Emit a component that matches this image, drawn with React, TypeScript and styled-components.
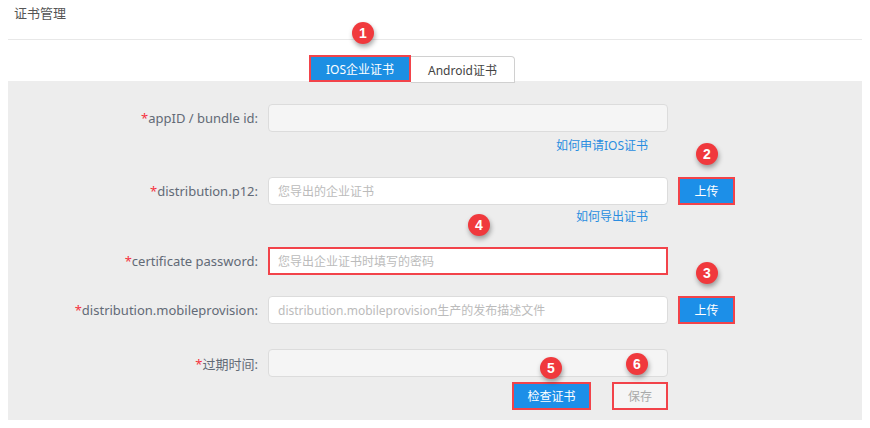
import React from 'react'
import styled, { createGlobalStyle } from 'styled-components'

const GlobalStyle = createGlobalStyle`
  html, body {
    margin: 0;
    padding: 0;
    background: #fff;
    font-family: "Noto Sans", "Noto Sans CJK SC", sans-serif;
  }
`

const Page = styled.div`
  width: 870px;
  height: 428px;
  position: relative;
  overflow: hidden;
`

const Header = styled.div`
  height: 40px;
  margin: 0 8px;
  border-bottom: 1px solid #e8e8e8;
  box-sizing: border-box;
  padding: 3px 0 0 6px;
  font-size: 13px;
  color: #555;
`

const Tabs = styled.div`
  display: flex;
  padding: 15px 0 0 301px;
  margin: 0 8px -2px;
  position: relative;
  z-index: 1;
`

const Tab = styled.div<{ $active?: boolean }>`
  height: 27px;
  box-sizing: border-box;
  display: flex;
  align-items: center;
  justify-content: center;
  font-size: 12px;
  width: ${(p) => (p.$active ? '102px' : '104px')};
  background: ${(p) => (p.$active ? '#1c8fe3' : '#fff')};
  color: ${(p) => (p.$active ? '#fff' : '#444')};
  border: ${(p) => (p.$active ? '2px solid #f2434a' : '1px solid #d0d0d0')};
  border-left: ${(p) => (p.$active ? '2px solid #f2434a' : 'none')};
  border-radius: ${(p) => (p.$active ? '0' : '0 4px 0 0')};
  margin-top: ${(p) => (p.$active ? '0' : '1px')};
`

const Panel = styled.div`
  margin: 0 8px;
  height: 339px;
  background: #ededed;
  padding-top: 23px;
  box-sizing: border-box;
`

const Row = styled.div<{ $gap?: number }>`
  display: grid;
  grid-template-columns: 250px 400px auto;
  column-gap: 10px;
  align-items: center;
  margin-top: ${(p) => p.$gap ?? 0}px;
  height: 28px;
`

const Label = styled.label`
  text-align: right;
  font-size: 13px;
  color: #626a76;
  white-space: nowrap;

  span {
    color: #f5333f;
  }
`

const Input = styled.div<{ $disabled?: boolean; $mark?: boolean }>`
  height: 28px;
  box-sizing: border-box;
  background: ${(p) => (p.$disabled ? '#f5f5f5' : '#fff')};
  border: ${(p) => (p.$mark ? '2px solid #f2434a' : '1px solid #dcdcdc')};
  border-radius: ${(p) => (p.$mark ? '0' : '4px')};
  padding: 0 ${(p) => (p.$mark ? '8px' : '9px')};
  display: flex;
  align-items: center;
  font-size: 12px;
  color: #bbb;
  white-space: nowrap;
  overflow: hidden;
`

const Hint = styled.div<{ $gap: number }>`
  margin: ${(p) => p.$gap}px 0 0 260px;
  width: 380px;
  height: 20px;
  line-height: 20px;
  text-align: right;
  font-size: 12px;
  color: #2a8de0;
`

const Button = styled.button<{ $primary?: boolean; $width: number }>`
  width: ${(p) => p.$width}px;
  height: 28px;
  box-sizing: border-box;
  border: 2px solid #f2434a;
  background: ${(p) => (p.$primary ? '#1c8fe8' : '#f5f5f5')};
  color: ${(p) => (p.$primary ? '#fff' : '#aaa')};
  font-family: inherit;
  font-size: 12px;
  padding: 0;
  cursor: pointer;
`

const Actions = styled.div`
  display: flex;
  gap: 21px;
  margin: 5px 0 0 504px;
`

const Badge = styled.div<{ $x: number; $y: number }>`
  position: absolute;
  left: ${(p) => p.$x - 11}px;
  top: ${(p) => p.$y - 11}px;
  width: 22px;
  height: 22px;
  border-radius: 50%;
  background: #f0393d;
  color: #fff;
  font-size: 14px;
  font-weight: 600;
  display: flex;
  align-items: center;
  justify-content: center;
  box-shadow: 1px 3px 5px rgba(0, 0, 0, 0.35);
  z-index: 5;
  font-family: "Liberation Sans", Arial, sans-serif;
`

const badges = [
  { n: 1, x: 363, y: 33 },
  { n: 2, x: 707, y: 154 },
  { n: 3, x: 707, y: 273 },
  { n: 4, x: 479, y: 225 },
  { n: 5, x: 551, y: 368 },
  { n: 6, x: 637, y: 364 },
]

export default function App() {
  return (
    <Page>
      <GlobalStyle />
      <Header>证书管理</Header>
      <Tabs>
        <Tab $active>IOS企业证书</Tab>
        <Tab>Android证书</Tab>
      </Tabs>
      <Panel>
        <Row>
          <Label><span>*</span>appID / bundle id:</Label>
          <Input $disabled />
        </Row>
        <Hint $gap={4}>如何申请IOS证书</Hint>
        <Row $gap={21}>
          <Label><span>*</span>distribution.p12:</Label>
          <Input>您导出的企业证书</Input>
          <Button $primary $width={57}>上传</Button>
        </Row>
        <Hint $gap={2}>如何导出证书</Hint>
        <Row $gap={20}>
          <Label><span>*</span>certificate password:</Label>
          <Input $mark>您导出企业证书时填写的密码</Input>
        </Row>
        <Row $gap={21}>
          <Label><span>*</span>distribution.mobileprovision:</Label>
          <Input>distribution.mobileprovision生产的发布描述文件</Input>
          <Button $primary $width={57}>上传</Button>
        </Row>
        <Row $gap={25}>
          <Label><span>*</span>过期时间:</Label>
          <Input $disabled />
        </Row>
        <Actions>
          <Button $primary $width={79}>检查证书</Button>
          <Button $width={56}>保存</Button>
        </Actions>
      </Panel>
      {badges.map((b) => (
        <Badge key={b.n} $x={b.x} $y={b.y}>{b.n}</Badge>
      ))}
    </Page>
  )
}
